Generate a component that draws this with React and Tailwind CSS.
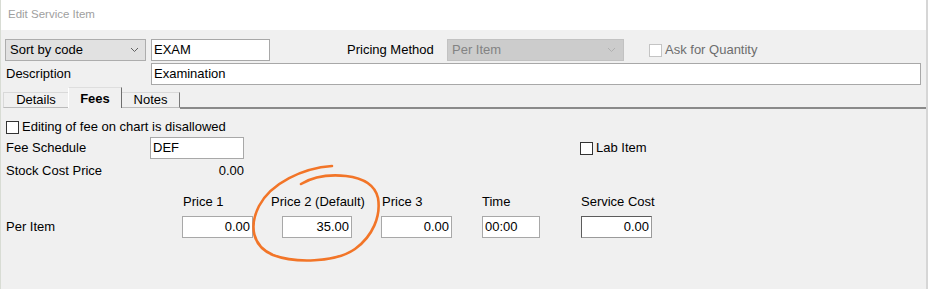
import React from "react";

const Chevron = ({ color = "#606060" }) => (
  <svg width="9" height="6" viewBox="0 0 9 6" fill="none">
    <path d="M1 1 L4.5 4.5 L8 1" stroke={color} strokeWidth="1" />
  </svg>
);

const Box = ({ disabled }) => (
  <span
    className={`inline-block w-[13px] h-[13px] bg-white border ${
      disabled ? "border-[#c4c4c4]" : "border-[#333333]"
    }`}
  />
);

const Field = ({ value, className = "", right, dark }) => (
  <div
    className={`h-[22px] bg-white border flex items-center px-[2px] ${
      dark ? "border-[#5c5c5c] border-b-[#9a9a9a] border-r-[#9a9a9a]" : "border-[#a8a8a8]"
    } ${right ? "justify-end" : ""} ${className}`}
  >
    {value}
  </div>
);

const App = () => {
  return (
    <div className="relative w-[928px] h-[289px] overflow-hidden bg-[#f0f0f0] text-[13px] text-black font-['Liberation_Sans',Arial,sans-serif] flex flex-col border-r-2 border-[#d6d6d6] border-l border-l-[#d8dcd4]">
      {/* title */}
      <div className="h-[30px] shrink-0 bg-white flex items-center pl-[7px] text-[11.5px] text-[#a0a0a0]">
        Edit Service Item
      </div>

      {/* row 1 */}
      <div className="mt-[9px] h-[22px] flex items-center pl-[4px]">
        <div className="w-[141px] h-[22px] bg-[#e1e1e1] border border-[#adadad] flex items-center justify-between pl-[4px] pr-[6px]">
          <span>Sort by code</span>
          <Chevron />
        </div>
        <Field value="EXAM" className="ml-[5px] w-[119px]" />
        <span className="ml-[77px] w-[88px]">Pricing Method</span>
        <div className="ml-[12px] w-[177px] h-[22px] bg-[#cccccc] border border-[#c2c2c2] flex items-center justify-between pl-[4px] pr-[7px] text-[#838383]">
          <span>Per Item</span>
          <Chevron color="#b0b0b0" />
        </div>
        <span className="ml-[25px] flex items-center gap-[3px] text-[#6d6d6d]">
          <Box disabled />
          Ask for Quantity
        </span>
      </div>

      {/* row 2 */}
      <div className="mt-[2px] h-[22px] flex items-center pl-[5px]">
        <span className="w-[145px]">Description</span>
        <Field value="Examination" className="w-[770px]" />
      </div>

      {/* tabs */}
      <div className="h-[21px] mt-[2px] flex items-end pl-[2px]">
        <div className="w-[65px] h-[16px] border-l border-t border-[#d9d9d9] border-b border-b-[#bcbcbc] flex items-center justify-center">
          Details
        </div>
        <div className="w-[54px] h-[21px] border-l border-t border-l-white border-t-[#dedede] border-r border-r-[#6e6e6e] flex items-start justify-center pt-[1px] font-bold">
          Fees
        </div>
        <div className="w-[58px] h-[16px] border-t border-[#d9d9d9] border-r border-r-[#7a7a7a] border-b border-b-[#bcbcbc] flex items-center justify-center">
          Notes
        </div>
        <div className="flex-1 h-[2px] bg-[#8a8a8a] mb-[-1px]" />
      </div>

      {/* content */}
      <div className="pl-[5px] flex flex-col">
        <div className="mt-[12px] h-[14px] flex items-center gap-[3px]">
          <Box />
          <span>Editing of fee on chart is disallowed</span>
        </div>

        <div className="mt-[3px] h-[22px] flex items-center">
          <span className="w-[144px]">Fee Schedule</span>
          <Field value="DEF" className="w-[94px]" />
          <span className="ml-[336px] flex items-center gap-[3px]">
            <Box />
            Lab Item
          </span>
        </div>

        <div className="mt-[1px] h-[22px] flex items-center">
          <span className="w-[144px]">Stock Cost Price</span>
          <span className="w-[94px] text-right">0.00</span>
        </div>

        <div className="mt-[12px] h-[16px] flex items-center">
          <span className="ml-[177px] w-[88px]">Price 1</span>
          <span className="w-[111px]">Price 2 (Default)</span>
          <span className="w-[100px]">Price 3</span>
          <span className="w-[99px]">Time</span>
          <span>Service Cost</span>
        </div>

        <div className="mt-[6px] h-[22px] flex items-center">
          <span className="w-[176px]">Per Item</span>
          <Field value="0.00" right className="w-[71px]" />
          <Field value="35.00" right className="ml-[29px] w-[70px]" />
          <Field value="0.00" right className="ml-[29px] w-[71px]" />
          <Field value="00:00" className="ml-[30px] w-[58px]" />
          <Field value="0.00" right dark className="ml-[41px] w-[71px]" />
        </div>
      </div>

      {/* annotation */}
      <svg
        className="absolute left-0 top-0 pointer-events-none"
        width="928"
        height="289"
        viewBox="0 0 928 289"
        fill="none"
      >
        <path
          d="M331,166 C302,168 270,183 258,206 C248,226 251,246 272,255 C293,263 334,263 354,249 C372,236 380,216 377,198 C374,185 362,178 345,176 C326,174 310,178 300,184"
          stroke="#f27528"
          strokeWidth="2.6"
          strokeLinecap="round"
        />
      </svg>
    </div>
  );
};

export default App;
